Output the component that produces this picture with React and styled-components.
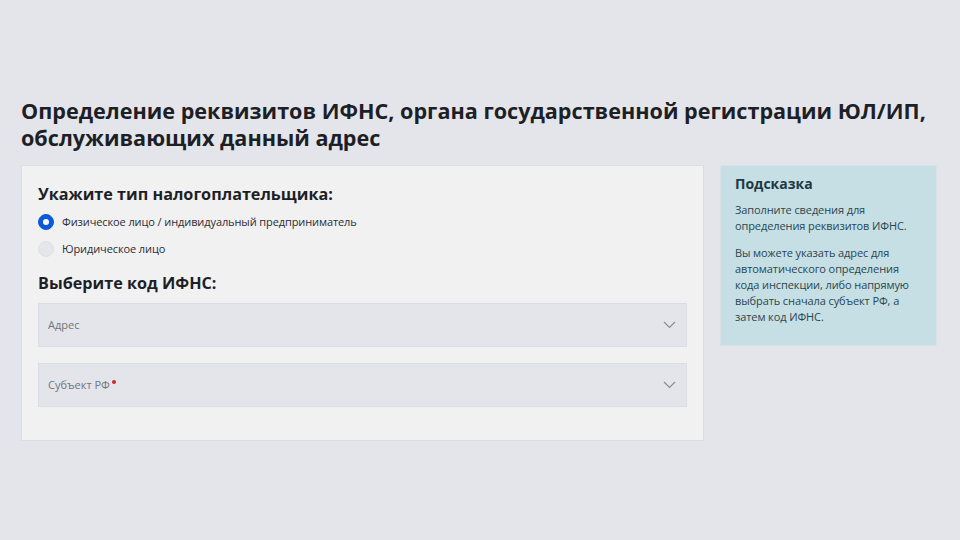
import styled, { createGlobalStyle } from "styled-components";

const GlobalStyle = createGlobalStyle`
  html, body {
    margin: 0;
    padding: 0;
    background: #e4e5ea;
    font-family: "Open Sans", "Liberation Sans", sans-serif;
    color: #1d1f26;
  }
  * { box-sizing: border-box; }
`;

const Page = styled.div`
  width: 960px;
  height: 540px;
  padding: 97px 23px 0 21px;
`;

const Title = styled.h1`
  margin: 0 0 14px;
  font-size: 21.6px;
  line-height: 27px;
  font-weight: 700;
  color: #1d1f26;
`;

const NoWrap = styled.span`
  white-space: nowrap;
`;

const Row = styled.div`
  display: flex;
  align-items: flex-start;
  gap: 16px;
`;

const Card = styled.section`
  width: 683px;
  height: 276px;
  background: #f1f1f2;
  border: 1px solid #dcdde1;
  padding: 16px 16px 0 16px;
`;

const SectionTitle = styled.h2`
  margin: 0 0 ${(p) => p.$mb || 0}px;
  font-size: 16.2px;
  line-height: 24px;
  font-weight: 700;
  color: #1d1f26;
`;

const Radios = styled.div`
  display: flex;
  flex-direction: column;
  gap: 7px;
  margin-bottom: 12px;
`;

const RadioRow = styled.label`
  display: flex;
  align-items: center;
  gap: 8px;
  font-size: 11px;
  letter-spacing: -0.1px;
  line-height: 20px;
  color: #2b2d33;
`;

const RadioDot = styled.span`
  width: 16px;
  height: 16px;
  border-radius: 50%;
  flex: none;
  background: ${(p) => (p.$checked ? "#0b5ad9" : "#e5e6ea")};
  border: 1px solid ${(p) => (p.$checked ? "#0b5ad9" : "#dfe0e4")};
  display: flex;
  align-items: center;
  justify-content: center;
  &::after {
    content: "";
    width: 6px;
    height: 6px;
    border-radius: 50%;
    background: #fff;
    display: ${(p) => (p.$checked ? "block" : "none")};
  }
`;

const Fields = styled.div`
  display: flex;
  flex-direction: column;
  gap: 16px;
  margin-top: 8px;
`;

const Select = styled.div`
  height: 44px;
  background: #e4e5ea;
  border: 1px solid #dcdde2;
  display: flex;
  align-items: center;
  justify-content: space-between;
  padding: 0 10px 0 9px;
`;

const Placeholder = styled.span`
  font-size: 11px;
  color: #72757c;
  position: relative;
  top: -1px;
`;

const Required = styled.span`
  display: inline-block;
  width: 4px;
  height: 4px;
  border-radius: 50%;
  background: #d3232c;
  vertical-align: top;
  margin: 3px 0 0 2px;
`;

const Chevron = () => (
  <svg width="13" height="8" viewBox="0 0 13 8" fill="none">
    <path d="M1 1l5.5 5.5L12 1" stroke="#8a8d94" strokeWidth="1.2" />
  </svg>
);

const Hint = styled.aside`
  width: 217px;
  height: 181px;
  background: #c6dfe5;
  border: 1px solid #d7e3e7;
  padding: 8px 14px;
  color: #29464f;
`;

const HintTitle = styled.h3`
  margin: 0 0 8px;
  font-size: 14px;
  line-height: 20px;
  font-weight: 700;
  color: #1d3942;
`;

const HintText = styled.p`
  margin: 0 0 11px;
  font-size: 11px;
  letter-spacing: -0.1px;
  line-height: 16px;
`;

export default function App() {
  return (
    <Page>
      <GlobalStyle />
      <Title>
        Определение реквизитов ИФНС, органа государственной регистрации{" "}
        <NoWrap>ЮЛ/ИП,</NoWrap> обслуживающих данный адрес
      </Title>
      <Row>
        <Card>
          <SectionTitle $mb={6}>Укажите тип налогоплательщика:</SectionTitle>
          <Radios>
            <RadioRow>
              <RadioDot $checked />
              Физическое лицо / индивидуальный предприниматель
            </RadioRow>
            <RadioRow>
              <RadioDot />
              Юридическое лицо
            </RadioRow>
          </Radios>
          <SectionTitle>Выберите код ИФНС:</SectionTitle>
          <Fields>
            <Select>
              <Placeholder>Адрес</Placeholder>
              <Chevron />
            </Select>
            <Select>
              <Placeholder>
                Субъект РФ<Required />
              </Placeholder>
              <Chevron />
            </Select>
          </Fields>
        </Card>
        <Hint>
          <HintTitle>Подсказка</HintTitle>
          <HintText>Заполните сведения для определения реквизитов ИФНС.</HintText>
          <HintText>
            Вы можете указать адрес для автоматического определения кода
            инспекции, либо напрямую выбрать сначала субъект РФ, а затем код
            ИФНС.
          </HintText>
        </Hint>
      </Row>
    </Page>
  );
}
